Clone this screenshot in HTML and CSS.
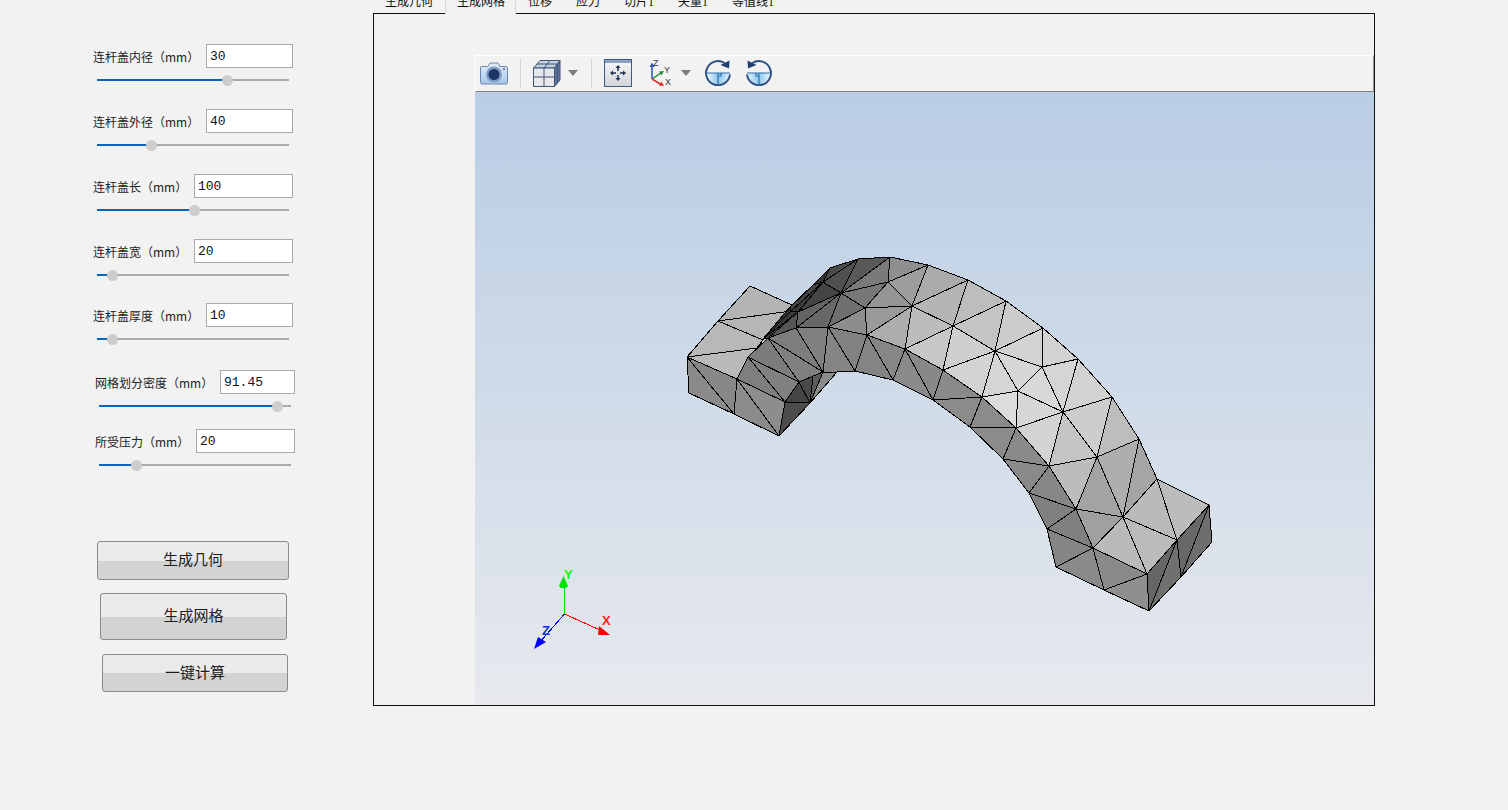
FILE: index.html
```html
<!DOCTYPE html>
<html lang="zh">
<head>
<meta charset="utf-8">
<title>连杆盖</title>
<link rel="stylesheet" href="styles.css">
</head>
<body>
<div class="app">
  <aside class="sidebar">
    <div class="field h65">
      <div class="field-row"><label class="label">连杆盖内径（mm）</label><input class="num w87" value="30"></div>
      <div class="slider"><div class="fill" style="width:67.7%"><span class="thumb"></span></div></div>
    </div>
    <div class="field h65">
      <div class="field-row"><label class="label">连杆盖外径（mm）</label><input class="num w87" value="40"></div>
      <div class="slider"><div class="fill" style="width:28%"><span class="thumb"></span></div></div>
    </div>
    <div class="field h65">
      <div class="field-row"><label class="label">连杆盖长（mm）</label><input class="num w99" value="100"></div>
      <div class="slider"><div class="fill" style="width:50.5%"><span class="thumb"></span></div></div>
    </div>
    <div class="field h64">
      <div class="field-row"><label class="label">连杆盖宽（mm）</label><input class="num w99" value="20"></div>
      <div class="slider"><div class="fill" style="width:7.8%"><span class="thumb"></span></div></div>
    </div>
    <div class="field h67">
      <div class="field-row"><label class="label">连杆盖厚度（mm）</label><input class="num w87" value="10"></div>
      <div class="slider"><div class="fill" style="width:7.8%"><span class="thumb"></span></div></div>
    </div>
    <div class="field h59 shifted">
      <div class="field-row"><label class="label">网格划分密度（mm）</label><input class="num w75" value="91.45"></div>
      <div class="slider"><div class="fill" style="width:92.7%"><span class="thumb"></span></div></div>
    </div>
    <div class="field h112 shifted">
      <div class="field-row"><label class="label">所受压力（mm）</label><input class="num w99" value="20"></div>
      <div class="slider"><div class="fill" style="width:19.3%"><span class="thumb"></span></div></div>
    </div>
    <button class="btn btn-a">生成几何</button>
    <button class="btn btn-b">生成网格</button>
    <button class="btn btn-c">一键计算</button>
  </aside>

  <main class="main">
    <nav class="tabs">
      <span class="tab">生成几何</span>
      <span class="tab active">生成网格</span>
      <span class="tab">位移</span>
      <span class="tab">应力</span>
      <span class="tab">切片1</span>
      <span class="tab">矢量1</span>
      <span class="tab">等值线1</span>
    </nav>
    <section class="frame">
      <div class="viewer">
        <div class="toolbar">
          <svg class="ico i-cam" width="28" height="24" viewBox="0 0 28 24">
            <defs><linearGradient id="cb" x1="0" y1="0" x2="0" y2="1"><stop offset="0" stop-color="#e4edf7"/><stop offset="1" stop-color="#a9c6e8"/></linearGradient></defs>
            <path d="M1.5 5.5 H8 L10 2 H18 L20 5.5 H26 Q27.5 5.5 27.5 7 V21.5 Q27.5 23 26 23 H2 Q.5 23 .5 21.5 V7 Q.5 5.5 1.500 5.500 Z" fill="url(#cb)" stroke="#6c86ab" stroke-width="1"/>
            <circle cx="14" cy="13.500" r="8" fill="#7f9ec6"/>
            <circle cx="14" cy="13.500" r="5.500" fill="#1d3566"/>
            <circle cx="24" cy="8" r="1" fill="#44618d"/>
          </svg>
          <span class="sep s12"></span>
          <svg class="ico i-cube" width="28" height="28" viewBox="0 0 28 28">
            <path d="M.5 9 L7 1.500 H27 L21.500 9 Z" fill="#c5d0de" stroke="#3f5478"/>
            <path d="M21.500 9 L27 1.500 V21 L21.500 27.500 Z" fill="#5f7598" stroke="#3f5478"/>
            <rect x=".5" y="9" width="21" height="18.500" fill="#e6e8ec" stroke="#3f5478"/>
            <path d="M11 9 V27.500 M.5 18 H21.500 M17 1.500 L11 9 M3.800 5 H24.200 M24.300 5.500 V24" fill="none" stroke="#3f5478"/>
          </svg>
          <svg class="ico i-drop1" width="10" height="6" viewBox="0 0 10 6"><path d="M0 0 H10 L5 6 Z" fill="#7c7c7c"/></svg>
          <span class="sep s13"></span>
          <svg class="ico i-fit" width="28" height="28" viewBox="0 0 28 28">
            <defs><linearGradient id="fb" x1="0" y1="0" x2="0" y2="1"><stop offset="0" stop-color="#f8f8f9"/><stop offset="1" stop-color="#d2d4d8"/></linearGradient></defs>
            <rect x=".5" y=".5" width="27" height="27" fill="url(#fb)" stroke="#41598a"/>
            <rect x="1" y="1" width="26" height="3" fill="#8ba0bf"/>
            <path d="M14 8 V12 M14 16 V20 M8 14 H12 M16 14 H20" stroke="#1f2f4f" stroke-width="1.500" fill="none"/>
            <path d="M14 6 L11.500 9 H16.500 Z M14 22 L11.500 19 H16.500 Z M6 14 L9 11.500 V16.500 Z M22 14 L19 11.500 V16.500 Z" fill="#1f2f4f"/>
          </svg>
          <svg class="ico i-axes" width="24" height="28" viewBox="0 0 24 28">
            <path d="M4 20 V7" stroke="#2a55b8" stroke-width="1.500" fill="none"/>
            <path d="M4 3.500 L1.500 8 H6.500 Z" fill="#2a55b8"/>
            <path d="M4 20 L13 14" stroke="#1e8a3c" stroke-width="1.500" fill="none"/>
            <path d="M16 12 L11 12.500 L13.500 16.500 Z" fill="#1e8a3c"/>
            <path d="M4 20 L13 25.500" stroke="#e02c2c" stroke-width="1.500" fill="none"/>
            <path d="M16 27 L11 26.500 L13.500 22.500 Z" fill="#e02c2c"/>
            <text class="ax-t" x="5" y="7">Z</text>
            <text class="ax-t" x="16" y="14">Y</text>
            <text class="ax-t" x="17" y="26">X</text>
          </svg>
          <svg class="ico i-drop2" width="10" height="6" viewBox="0 0 10 6"><path d="M0 0 H10 L5 6 Z" fill="#7c7c7c"/></svg>
          <svg class="ico i-rot1" width="26" height="26" viewBox="0 0 26 26">
            <defs><linearGradient id="rb" x1="0" y1="0" x2="1" y2="0"><stop offset="0" stop-color="#f4f9fd"/><stop offset=".5" stop-color="#8cc8ee"/><stop offset="1" stop-color="#e2f1fa"/></linearGradient></defs>
            <path d="M1 13 H25 A12 12 0 0 1 1 13 Z" fill="url(#rb)" stroke="none"/>
            <path d="M19.500 3 A12 12 0 1 0 25 14.500" fill="none" stroke="#2e4f80" stroke-width="2"/>
            <path d="M1 13 H25 M13 13 V25 M13 16 H16 V13" stroke="#2e6fb0" stroke-width="1.200" fill="none"/>
            <path d="M24.500 .5 L24 8.500 L15.500 5 Z" fill="#1e3f70"/>
          </svg>
          <svg class="ico i-rot2" width="26" height="26" viewBox="0 0 26 26">
            <defs><linearGradient id="rc" x1="1" y1="0" x2="0" y2="0"><stop offset="0" stop-color="#f4f9fd"/><stop offset=".5" stop-color="#8cc8ee"/><stop offset="1" stop-color="#e2f1fa"/></linearGradient></defs>
            <path d="M1 13 H25 A12 12 0 0 1 1 13 Z" fill="url(#rc)" stroke="none"/>
            <path d="M6.500 3 A12 12 0 1 1 1 14.500" fill="none" stroke="#2e4f80" stroke-width="2"/>
            <path d="M1 13 H25 M13 13 V25 M13 16 H10 V13" stroke="#2e6fb0" stroke-width="1.200" fill="none"/>
            <path d="M1.500 .5 L2 8.500 L10.500 5 Z" fill="#1e3f70"/>
          </svg>
        </div>
        <div class="canvas">
          <svg class="scene" width="899" height="613" viewBox="475 92 899 613">
            <g class="mesh">
              <!-- left block top -->
              <polygon fill="#b4b4b4" points="750,286 792,305 791,311 718,321"/>
              <polygon fill="#b6b6b6" points="718,321 791,311 763,340"/>
              <polygon fill="#b8b8b8" points="718,321 763,340 757,348 687,357"/>
              <polygon fill="#bababa" points="687,357 757,348 748,357 737,379"/>
              <!-- left block front -->
              <polygon fill="#8a8a8a" points="687,357 689,393 734,414"/>
              <polygon fill="#888888" points="687,357 734,414 737,379"/>
              <polygon fill="#8b8b8b" points="737,379 734,414 779,436"/>
              <polygon fill="#8d8d8d" points="737,379 779,436 785,402"/>
              <!-- inner dark face -->
              <polygon fill="#4c4c4c" points="785,402 810,403 779,436"/>
              <polygon fill="#454545" points="785,402 799,382 810,403"/>
              <polygon fill="#4a4a4a" points="799,382 813,376 810,403"/>
              <polygon fill="#5c5c5c" points="813,376 823,372 810,403"/>
              <polygon fill="#8a8a8a" points="823,372 837,372 810,403"/>
              <!-- left wall -->
              <polygon fill="#7f7f7f" points="748,357 737,379 785,402"/>
              <polygon fill="#808080" points="748,357 785,402 799,382"/>
              <polygon fill="#7c7c7c" points="748,357 799,382 768,338"/>
              <polygon fill="#808080" points="768,338 799,382 823,372"/>
              <polygon fill="#7d7d7d" points="768,338 823,372 796,328"/>
              <polygon fill="#808080" points="796,328 823,372 828,327"/>
              <polygon fill="#858585" points="828,327 823,372 837,372 855,371"/>
              <polygon fill="#828282" points="828,327 855,371 867,335"/>
              <polygon fill="#848484" points="867,335 855,371 893,380"/>
              <polygon fill="#868686" points="867,335 893,380 905,349"/>
              <polygon fill="#8a8a8a" points="905,349 893,380 933,400"/>
              <polygon fill="#888888" points="905,349 933,400 943,370"/>
              <polygon fill="#8a8a8a" points="943,370 933,400 982,397"/>
              <polygon fill="#8b8b8b" points="933,400 970,427 982,397"/>
              <polygon fill="#8b8b8b" points="970,427 982,397 1016,428"/>
              <polygon fill="#8b8b8b" points="970,427 1003,459 1016,428"/>
              <polygon fill="#8a8a8a" points="1003,459 1016,428 1049,466"/>
              <polygon fill="#8a8a8a" points="1003,459 1029,493 1049,466"/>
              <polygon fill="#868686" points="1029,493 1049,466 1076,509"/>
              <polygon fill="#808080" points="1029,493 1047,529 1076,509"/>
              <polygon fill="#808080" points="1047,529 1076,509 1093,548"/>
              <polygon fill="#858585" points="1047,529 1056,567 1093,548"/>
              <polygon fill="#8a8a8a" points="1056,567 1104,590 1093,548"/>
              <polygon fill="#8a8a8a" points="1093,548 1104,590 1147,574"/>
              <polygon fill="#8f8f8f" points="1104,590 1149,611 1147,574"/>
              <!-- right end -->
              <polygon fill="#666666" points="1147,574 1177,540 1149,611"/>
              <polygon fill="#707070" points="1177,540 1181,577 1149,611"/>
              <polygon fill="#686868" points="1177,540 1209,505 1181,577"/>
              <polygon fill="#6e6e6e" points="1209,505 1212,542 1181,577"/>
              <!-- dark ridge -->
              <polygon fill="#333333" points="763,339 790,307 791,311"/>
              <polygon fill="#3a3a3a" points="763,339 791,311 798,312"/>
              <polygon fill="#4c4c4c" points="763,339 798,312 768,338"/>
              <polygon fill="#565656" points="768,338 798,312 796,328"/>
              <polygon fill="#646464" points="798,312 796,328 841,293"/>
              <polygon fill="#444444" points="798,312 841,293 823,282"/>
              <polygon fill="#3a3a3a" points="791,311 823,282 798,312"/>
              <polygon fill="#444444" points="790,307 813,285 823,282 791,311"/>
              <polygon fill="#333333" points="813,285 830,268 823,282"/>
              <polygon fill="#4b4b4b" points="830,268 858,259 823,282"/>
              <polygon fill="#505050" points="858,259 823,282 841,293"/>
              <polygon fill="#585858" points="858,259 890,257 841,293"/>
              <polygon fill="#7a7a7a" points="890,257 888,282 841,293"/>
              <polygon fill="#686868" points="841,293 796,328 828,327"/>
              <polygon fill="#6f6f6f" points="841,293 865,308 828,327"/>
              <polygon fill="#777777" points="841,293 888,282 865,308"/>
              <polygon fill="#8d8d8d" points="865,308 867,335 828,327"/>
              <!-- arc top -->
              <polygon fill="#8f8f8f" points="890,257 888,282 928,265"/>
              <polygon fill="#9d9d9d" points="928,265 888,282 912,306"/>
              <polygon fill="#959595" points="888,282 865,308 912,306"/>
              <polygon fill="#9a9a9a" points="865,308 867,335 912,306"/>
              <polygon fill="#adadad" points="912,306 867,335 905,349"/>
              <polygon fill="#ababab" points="928,265 968,280 912,306"/>
              <polygon fill="#b5b5b5" points="968,280 953,326 912,306"/>
              <polygon fill="#bcbcbc" points="912,306 953,326 905,349"/>
              <polygon fill="#c7c7c7" points="905,349 953,326 943,370"/>
              <polygon fill="#bdbdbd" points="968,280 1006,301 953,326"/>
              <polygon fill="#c4c4c4" points="1006,301 995,351 953,326"/>
              <polygon fill="#cfcfcf" points="953,326 995,351 943,370"/>
              <polygon fill="#d3d3d3" points="943,370 995,351 982,397"/>
              <polygon fill="#cbcbcb" points="1006,301 1043,328 995,351"/>
              <polygon fill="#d2d2d2" points="1043,328 1042,367 995,351"/>
              <polygon fill="#d6d6d6" points="995,351 1042,367 1018,391"/>
              <polygon fill="#d5d5d5" points="995,351 1018,391 982,397"/>
              <polygon fill="#dcdcdc" points="982,397 1018,391 1016,428"/>
              <polygon fill="#d2d2d2" points="1043,328 1078,359 1042,367"/>
              <polygon fill="#d5d5d5" points="1078,359 1063,412 1042,367"/>
              <polygon fill="#d8d8d8" points="1042,367 1063,412 1018,391"/>
              <polygon fill="#d6d6d6" points="1018,391 1063,412 1016,428"/>
              <polygon fill="#d3d3d3" points="1016,428 1063,412 1049,466"/>
              <polygon fill="#d2d2d2" points="1078,359 1112,397 1063,412"/>
              <polygon fill="#cdcdcd" points="1112,397 1097,457 1063,412"/>
              <polygon fill="#c4c4c4" points="1063,412 1097,457 1049,466"/>
              <polygon fill="#bcbcbc" points="1049,466 1097,457 1076,509"/>
              <polygon fill="#bdbdbd" points="1112,397 1139,439 1097,457"/>
              <polygon fill="#aeaeae" points="1139,439 1123,517 1097,457"/>
              <polygon fill="#a3a3a3" points="1097,457 1123,517 1076,509"/>
              <polygon fill="#a0a0a0" points="1076,509 1123,517 1093,548"/>
              <polygon fill="#a5a5a5" points="1139,439 1157,479 1123,517"/>
              <polygon fill="#bababa" points="1157,479 1177,540 1123,517"/>
              <polygon fill="#bbbbbb" points="1123,517 1177,540 1147,574"/>
              <polygon fill="#bababa" points="1123,517 1147,574 1093,548"/>
              <polygon fill="#bcbcbc" points="1157,479 1209,505 1177,540"/>
            </g>
            <g class="triad">
              <path class="ax-y" d="M564.500 614 V587"/>
              <path class="ax-x" d="M564.500 614 L600 630"/>
              <path class="ax-z" d="M564.500 614 L540 642"/>
              <polygon class="hd-y" points="563.500,576 568,586 566,588 561,588 559,586"/>
              <polygon class="hd-x" points="610,635 598,635 599,626"/>
              <polygon class="hd-z" points="534,649 538,637 546,642"/>
              <text class="lb lb-y" x="564" y="579">Y</text>
              <text class="lb lb-x" x="602" y="625">X</text>
              <text class="lb lb-z" x="542" y="635">Z</text>
            </g>
          </svg>
        </div>
      </div>
    </section>
  </main>
</div>
</body>
</html>
```
FILE: styles.css
```css
* { box-sizing: border-box; }
html, body { margin: 0; padding: 0; }
body {
  width: 1508px;
  height: 810px;
  overflow: hidden;
  background: #f2f2f2;
  color: #111;
  font-family: "Noto Sans CJK SC", "Noto Sans", sans-serif;
  font-size: 12px;
}
.app { display: flex; align-items: flex-start; }

/* left panel */
.sidebar { flex: none; width: 373px; padding-top: 44px; display: flex; flex-direction: column; align-items: flex-start; }
.field { width: 200px; margin-left: 93px; }
.field.shifted { margin-left: 95px; }
.h59 { height: 59px; }
.h64 { height: 64px; }
.h65 { height: 65px; }
.h67 { height: 67px; }
.h112 { height: 112px; }
.field-row { display: flex; justify-content: space-between; align-items: center; height: 24px; }
.label { margin-top: 2px; font-size: 12px; line-height: 22px; white-space: nowrap; color: #222; }
.num {
  height: 24px;
  padding: 0 3px;
  border: 1px solid #a9a9a9;
  border-radius: 0;
  background: #fff;
  color: #111;
  font-family: "Liberation Mono", "DejaVu Sans Mono", monospace;
  font-size: 13px;
  outline: none;
}
.w75 { width: 75px; }
.w87 { width: 87px; }
.w99 { width: 99px; }
.slider { height: 2px; margin: 11px 4px 0; background: #aaaaaa; }
.fill { position: relative; height: 2px; background: #0a64b8; }
.thumb { position: absolute; right: -6px; top: -4.5px; width: 11px; height: 11px; border-radius: 50%; background: #cdcdcd; }

.btn {
  display: block;
  padding: 0 0 3px;
  border: 1px solid #8a8a8a;
  border-radius: 3px;
  background: linear-gradient(#ebebeb 0, #ebebeb 51%, #d3d3d3 51%, #d3d3d3 100%);
  color: #1c1c1c;
  font-family: "Noto Sans CJK SC", sans-serif;
  font-size: 15px;
  line-height: 20px;
}
.btn-a { width: 192px; height: 39px; margin-left: 97px; }
.btn-b { width: 187px; height: 47px; margin-left: 100px; margin-top: 13px; }
.btn-c { width: 186px; height: 38px; margin-left: 102px; margin-top: 14px; }

/* main area */
.main { flex: none; width: 1002px; margin-top: -8px; }
.tabs { display: flex; height: 21px; }
.tab {
  padding: 0 12px;
  font-family: "Liberation Serif", "Noto Sans CJK SC", serif;
  line-height: 21px;
  font-size: 12px;
  white-space: nowrap;
}
.tab.active {
  position: relative;
  z-index: 1;
  height: 22px;
  background: #f2f2f2;
  border-left: 1px solid #d9d9d9;
  border-right: 1px solid #d9d9d9;
  padding: 0 10px 0 11px;
}
.frame { height: 693px; padding: 41px 0 0 101px; border: 1px solid #111; }
.viewer { display: flex; flex-direction: column; height: 100%; }
.toolbar {
  flex: none;
  display: flex;
  align-items: center;
  height: 37px;
  padding: 0 0 2px 4px;
  border-top: 1px solid #fff;
  border-left: 1px solid #fff;
  border-right: 1px solid #9a9a9a;
  border-bottom: 1px solid #7f7f7f;
  background: #f2f2f2;
}
.ico { flex: none; display: block; }
.sep { flex: none; width: 1px; height: 30px; background: #d4d4d4; }
.s12 { margin-left: 12px; }
.s13 { margin-left: 13px; }
.i-cube { margin-left: 12px; }
.i-drop1 { margin-left: 7px; }
.i-fit { margin-left: 12px; }
.i-axes { margin-left: 16px; }
.i-drop2 { margin-left: 9px; }
.i-rot1 { margin-left: 14px; }
.i-rot2 { margin-left: 15px; }
.ax-t { font-family: "Liberation Sans", sans-serif; font-size: 9px; fill: #333; }

.canvas { flex: 1; min-height: 0; background: linear-gradient(#b9cde4, #e7e9ee); }
.scene { display: block; }
.mesh polygon { stroke: #000; stroke-width: 1; stroke-linejoin: round; shape-rendering: crispEdges; }
.triad path { fill: none; stroke-width: 1; shape-rendering: crispEdges; }
.ax-y { stroke: #00e000; }
.ax-x { stroke: #ff0000; }
.ax-z { stroke: #0000ff; }
.hd-y { fill: #00e000; }
.hd-x { fill: #ff0000; }
.hd-z { fill: #0000ff; }
.lb { font-family: "Liberation Sans", sans-serif; font-size: 13px; font-weight: 700; }
.lb-y { fill: #00ff00; }
.lb-x { fill: #ff2020; }
.lb-z { fill: #1030e0; }
```
